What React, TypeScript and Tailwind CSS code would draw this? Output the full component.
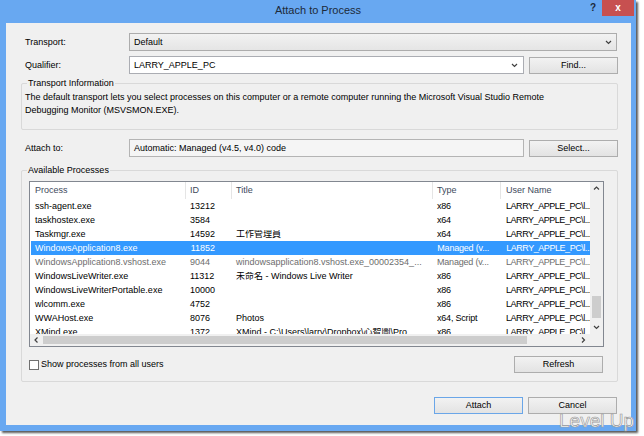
import React from "react";

type Proc = {
  name: string;
  id: string;
  title: string;
  type: string;
  user: string;
  state?: "selected" | "dim";
};

const USER = "LARRY_APPLE_PC\\l...";

const processes: Proc[] = [
  { name: "ssh-agent.exe", id: "13212", title: "", type: "x86", user: USER },
  { name: "taskhostex.exe", id: "3584", title: "", type: "x64", user: USER },
  { name: "Taskmgr.exe", id: "14592", title: "工作管理員", type: "x64", user: USER },
  { name: "WindowsApplication8.exe", id: "11852", title: "", type: "Managed (v...", user: USER, state: "selected" },
  {
    name: "WindowsApplication8.vshost.exe",
    id: "9044",
    title: "windowsapplication8.vshost.exe_00002354_...",
    type: "Managed (v...",
    user: USER,
    state: "dim",
  },
  { name: "WindowsLiveWriter.exe", id: "11312", title: "未命名 - Windows Live Writer", type: "x86", user: USER },
  { name: "WindowsLiveWriterPortable.exe", id: "10000", title: "", type: "x86", user: USER },
  { name: "wlcomm.exe", id: "4752", title: "", type: "x86", user: USER },
  { name: "WWAHost.exe", id: "8076", title: "Photos", type: "x64, Script", user: USER },
  { name: "XMind.exe", id: "1372", title: "XMind - C:\\Users\\larry\\Dropbox\\心智圖\\Pro", type: "x86", user: USER },
];

function Chevron({ dir }: { dir: "up" | "down" | "left" | "right" }) {
  const pts = {
    down: "1,1 3.5,3.5 6,1",
    up: "1,3.5 3.5,1 6,3.5",
    left: "3.5,0.5 1,3 3.5,5.5",
    right: "1,0.5 3.5,3 1,5.5",
  }[dir];
  const vertical = dir === "up" || dir === "down";
  return (
    <svg width={vertical ? 7 : 5} height={vertical ? 5 : 6} viewBox={vertical ? "0 0 7 5" : "0 0 5 6"}>
      <polyline points={pts} fill="none" stroke="#404040" strokeWidth="1.2" />
    </svg>
  );
}

function Button({ label, primary }: { label: string; primary?: boolean }) {
  return (
    <div
      className={
        "flex h-[17px] w-[89px] items-center justify-center border bg-gradient-to-b from-[#f2f2f2] to-[#e3e3e3] text-black " +
        (primary ? "border-[#6aa6e8]" : "border-[#adadad]")
      }
    >
      {label}
    </div>
  );
}

export default function App() {
  return (
    <div className="min-h-screen bg-white font-['Liberation_Sans','Noto_Sans_CJK_TC',Arial,sans-serif] text-[9px] leading-none text-black">
      <div className="relative flex h-[431px] w-[636px] flex-col bg-[#68a8f1] shadow-[2px_2px_2px_rgba(0,0,0,0.65)]">
        {/* title bar */}
        <div className="grid h-[23px] grid-cols-[1fr_auto_1fr] items-start">
          <div />
          <div className="pt-[5px] text-[11px] text-[#1c2a3a]">Attach to Process</div>
          <div className="flex justify-end pr-[2px]">
            <div className="mr-[6px] pt-[3px] text-[10px] font-bold text-[#1c2a3a]">?</div>
            <div className="flex h-[16px] w-[32px] items-center justify-center bg-[#c75050] text-[10px] font-bold text-white">
              x
            </div>
          </div>
        </div>

        {/* client area */}
        <div className="ml-[6px] mr-[5px] flex h-[402px] flex-col bg-[#f0f0f0] pl-[15px] pr-[13px]">
          {/* Transport */}
          <div className="mt-[10px] flex h-[18px] items-center">
            <div className="w-[108px] pl-[4px]">Transport:</div>
            <div className="mr-[1px] flex h-full flex-1 items-center justify-between border border-[#acacac] bg-gradient-to-b from-[#f2f2f2] to-[#e5e5e5] pl-[4px] pr-[4px]">
              <span>Default</span>
              <Chevron dir="down" />
            </div>
          </div>

          {/* Qualifier */}
          <div className="mt-[5px] flex h-[18px] items-center">
            <div className="w-[108px] pl-[4px]">Qualifier:</div>
            <div className="flex h-full w-[395px] items-center justify-between border border-[#abadb3] bg-white pl-[4px] pr-[5px]">
              <span>LARRY_APPLE_PC</span>
              <Chevron dir="down" />
            </div>
            <div className="ml-[5px]">
              <Button label="Find..." />
            </div>
          </div>

          {/* Transport Information */}
          <div className="relative mt-[9px] h-[47px] rounded-[2px] border border-[#d9d9d9] pl-[3px] pt-[7px] leading-[13px]">
            <div className="absolute -top-[6px] left-[5px] bg-[#f0f0f0] px-[1px] leading-[11px]">
              Transport Information
            </div>
            <div>
              The default transport lets you select processes on this computer or a remote computer running the Microsoft
              Visual Studio Remote
            </div>
            <div>Debugging Monitor (MSVSMON.EXE).</div>
          </div>

          {/* Attach to */}
          <div className="mt-[9px] flex h-[18px] items-center">
            <div className="w-[108px] pl-[4px]">Attach to:</div>
            <div className="flex h-full w-[395px] items-center border border-[#b4b4b4] bg-[#f5f5f5] pl-[4px]">
              Automatic: Managed (v4.5, v4.0) code
            </div>
            <div className="ml-[5px]">
              <Button label="Select..." />
            </div>
          </div>

          {/* Available Processes */}
          <div className="relative mt-[13px] flex h-[212px] flex-col rounded-[2px] border border-[#d9d9d9]">
            <div className="absolute -top-[6px] left-[5px] bg-[#f0f0f0] px-[1px] leading-[11px]">Available Processes</div>

            <div className="ml-[7px] mr-[13px] mt-[10px] flex h-[166px] flex-col border border-[#828790] bg-white">
              <div className="flex h-[152px]">
                <div className="flex w-[560px] flex-col overflow-hidden">
                  {/* header */}
                  <div className="flex h-[17px] shrink-0 items-center text-[#3e4a5c]">
                    <div className="flex h-full w-[156px] items-center border-r border-[#e5e5e5] pl-[5px]">Process</div>
                    <div className="flex h-full w-[46px] items-center border-r border-[#e5e5e5] pl-[4px]">ID</div>
                    <div className="flex h-full w-[201px] items-center border-r border-[#e5e5e5] pl-[4px]">Title</div>
                    <div className="flex h-full w-[68px] items-center border-r border-[#e5e5e5] pl-[4px]">Type</div>
                    <div className="flex h-full w-[89px] items-center pl-[5px]">User Name</div>
                  </div>
                  {/* rows */}
                  <div className="flex flex-col">
                    {processes.map((p) => (
                      <div
                        key={p.name}
                        className={
                          "flex h-[14px] shrink-0 items-center whitespace-nowrap " +
                          (p.state === "selected"
                            ? "ml-[1px] bg-[#3399ff] text-white"
                            : p.state === "dim"
                              ? "text-[#6d6d6d]"
                              : "")
                        }
                      >
                        <div className={"w-[156px] overflow-hidden " + (p.state === "selected" ? "pl-[4px]" : "pl-[5px]")}>
                          {p.name}
                        </div>
                        <div className="w-[46px] overflow-hidden pl-[4px]">{p.id}</div>
                        <div className="w-[201px] overflow-hidden pl-[4px]">{p.title}</div>
                        <div className="w-[68px] overflow-hidden pl-[4px] tracking-[-0.2px]">{p.type}</div>
                        <div className="w-[89px] overflow-hidden pl-[5px] tracking-[-0.45px]">{p.user}</div>
                      </div>
                    ))}
                  </div>
                </div>
                {/* vertical scrollbar */}
                <div className="flex w-[13px] flex-col items-center bg-[#f0f0f0]">
                  <div className="flex h-[13px] items-center justify-center">
                    <Chevron dir="up" />
                  </div>
                  <div className="h-[101px]" />
                  <div className="h-[22px] w-[9px] bg-[#cdcdcd]" />
                  <div className="flex-1" />
                  <div className="flex h-[13px] items-center justify-center">
                    <Chevron dir="down" />
                  </div>
                </div>
              </div>
              {/* horizontal scrollbar */}
              <div className="flex h-[12px]">
                <div className="flex w-[560px] items-center bg-[#f0f0f0]">
                  <div className="flex w-[13px] justify-center">
                    <Chevron dir="left" />
                  </div>
                  <div className="h-[8px] w-[484px] bg-[#cdcdcd]" />
                  <div className="flex flex-1 justify-end pr-[4px]">
                    <Chevron dir="right" />
                  </div>
                </div>
                <div className="w-[13px] bg-[#f0f0f0]" />
              </div>
            </div>

            <div className="ml-[7px] mr-[14px] mt-[9px] flex h-[17px] items-center justify-between">
              <label className="flex items-center">
                <span className="h-[10px] w-[10px] border border-[#707070] bg-white" />
                <span className="ml-[2px]">Show processes from all users</span>
              </label>
              <Button label="Refresh" />
            </div>
          </div>

          {/* footer buttons */}
          <div className="mr-[1px] mt-[15px] flex justify-end gap-[5px]">
            <Button label="Attach" primary />
            <Button label="Cancel" />
          </div>
        </div>

        {/* watermark */}
        <div className="absolute bottom-[1px] right-[2px] text-[19px] font-light leading-none text-white [-webkit-text-stroke:0.7px_#9a9a9a]">
          Level Up
        </div>
      </div>
    </div>
  );
}
